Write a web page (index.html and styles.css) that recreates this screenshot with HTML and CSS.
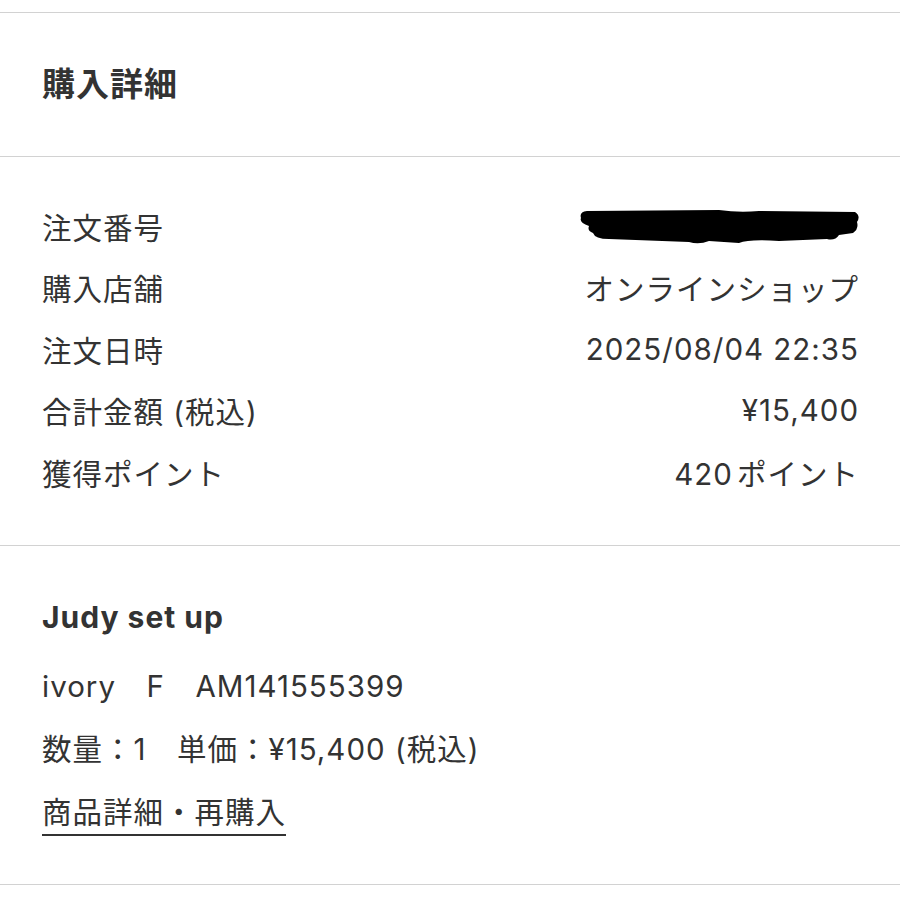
FILE: index.html
```html
<!DOCTYPE html>
<html lang="ja">
<head>
  <meta charset="UTF-8" />
  <meta name="viewport" content="width=device-width, initial-scale=1.0"/>
  <title>購入詳細</title>
  <link rel="stylesheet" href="styles.css">
</head>
<body>
  <section class="block head">
    <h1>購入詳細</h1>
  </section>

  <section class="block details">
    <div class="row">
      <span class="label">注文番号</span>
      <span class="value redacted">
        <svg width="280" height="40" viewBox="0 0 280 40">
          <path d="M2 12 Q0 6 8 5 L140 4 Q160 7 180 5 L276 6 Q282 10 278 16 Q280 23 274 27 L260 29 Q256 35 248 33 L200 35 Q170 33 160 37 L130 35 Q120 39 110 36 L30 33 Q16 33 14 27 Q8 25 10 20 Q0 17 2 12 Z" fill="#000"/>
        </svg>
      </span>
    </div>
    <div class="row">
      <span class="label">購入店舗</span>
      <span class="value">オンラインショップ</span>
    </div>
    <div class="row">
      <span class="label">注文日時</span>
      <span class="value">2025/08/04 22:35</span>
    </div>
    <div class="row">
      <span class="label">合計金額 (税込)</span>
      <span class="value">¥15,400</span>
    </div>
    <div class="row">
      <span class="label">獲得ポイント</span>
      <span class="value"><span class="num">420</span>ポイント</span>
    </div>
  </section>

  <section class="block item">
    <h2>Judy set up</h2>
    <p class="line">ivory　F　AM141555399</p>
    <p class="line">数量：1　単価：¥15,400 (税込)</p>
    <p class="line"><a href="#" class="link">商品詳細・再購入</a></p>
  </section>
</body>
</html>
```

FILE: styles.css
```css
body {
  margin: 0;
  padding-top: 12px;
  background: #fff;
  color: #333;
  font-family: Inter, "Noto Sans CJK JP", sans-serif;
  letter-spacing: 1px;
}

.block {
  border-top: 1px solid #d2d2d2;
  padding: 0 42px;
}

.head {
  height: 144px;
  display: flex;
  align-items: center;
  box-sizing: border-box;
  padding-bottom: 6px;
}

h1 {
  margin: 0;
  font-size: 33px;
  font-weight: bold;
}

.details {
  padding-top: 38px;
  padding-bottom: 42px;
}

.row {
  display: flex;
  justify-content: space-between;
  align-items: center;
  height: 61.5px;
  font-size: 29.5px;
}

.value {
  margin-right: -1px;
}

.num {
  margin-right: 4px;
}

.redacted svg {
  display: block;
}

.item {
  padding-top: 51px;
  padding-bottom: 40px;
  border-bottom: 1px solid #d2d2d2;
}

h2 {
  margin: 0 0 18px;
  font-size: 30px;
  font-weight: bold;
  line-height: 40px;
}

.line {
  margin: 0;
  font-size: 29.5px;
  line-height: 63px;
}

.link {
  color: #333;
  text-decoration: none;
  border-bottom: 2px solid #333;
  padding-bottom: 4px;
}
```
